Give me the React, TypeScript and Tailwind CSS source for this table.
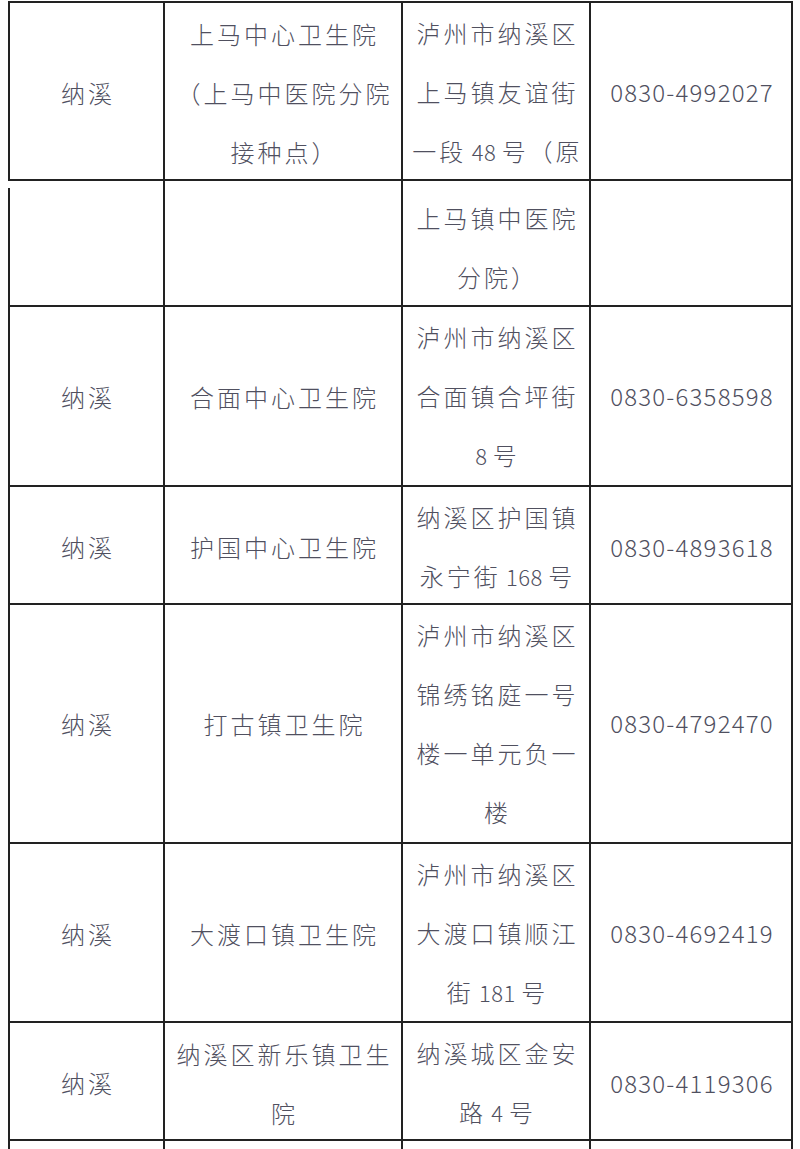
import React from "react";

type Row = {
  h: string;
  town: string;
  name: string[];
  addr: string[];
  phone: string;
};

const first: Row[] = [
  {
    h: "h-[178px]",
    town: "纳溪",
    name: ["上马中心卫生院", "（上马中医院分院", "接种点）"],
    addr: ["泸州市纳溪区", "上马镇友谊街", "一段 48 号（原"],
    phone: "0830-4992027",
  },
];

const rest: Row[] = [
  { h: "h-[119px]", town: "", name: [], addr: ["上马镇中医院", "分院）"], phone: "" },
  {
    h: "h-[180px]",
    town: "纳溪",
    name: ["合面中心卫生院"],
    addr: ["泸州市纳溪区", "合面镇合坪街", "8 号"],
    phone: "0830-6358598",
  },
  {
    h: "h-[118px]",
    town: "纳溪",
    name: ["护国中心卫生院"],
    addr: ["纳溪区护国镇", "永宁街 168 号"],
    phone: "0830-4893618",
  },
  {
    h: "h-[239px]",
    town: "纳溪",
    name: ["打古镇卫生院"],
    addr: ["泸州市纳溪区", "锦绣铭庭一号", "楼一单元负一", "楼"],
    phone: "0830-4792470",
  },
  {
    h: "h-[179px]",
    town: "纳溪",
    name: ["大渡口镇卫生院"],
    addr: ["泸州市纳溪区", "大渡口镇顺江", "街 181 号"],
    phone: "0830-4692419",
  },
  {
    h: "h-[118px]",
    town: "纳溪",
    name: ["纳溪区新乐镇卫生", "院"],
    addr: ["纳溪城区金安", "路 4 号"],
    phone: "0830-4119306",
  },
  { h: "h-[120px]", town: "", name: [], addr: [], phone: "" },
];

// digits inside addresses are narrower than the CJK text around them
function Mixed({ text }: { text: string }) {
  const parts = text.split(/( ?\d+ ?)/);
  return (
    <>
      {parts.map((p, i) =>
        /\d/.test(p) ? (
          <span key={i} className="whitespace-pre text-[22px] tracking-[0.5px]">
            {p}
          </span>
        ) : (
          <span key={i}>{p}</span>
        )
      )}
    </>
  );
}

function Cell({ lines }: { lines: string[] }) {
  return (
    <div className="flex flex-col items-center justify-center border-r-2 border-[#222] pb-[8px]">
      {lines.map((l) => (
        <div key={l} className="whitespace-nowrap pl-[3px] leading-[59px]">
          <Mixed text={l} />
        </div>
      ))}
    </div>
  );
}

function TableRow({ row }: { row: Row }) {
  return (
    <div
      className={`grid grid-cols-[155px_238px_188px_202px] border-b-2 border-[#222] ${row.h}`}
    >
      <Cell lines={row.town ? [row.town] : []} />
      <Cell lines={row.name} />
      <Cell lines={row.addr} />
      <div className="flex items-center justify-center border-r-2 border-[#222] pb-[8px] pl-[2px]">
        <span className="tracking-[1.2px]">{row.phone}</span>
      </div>
    </div>
  );
}

export default function App() {
  return (
    <div className="h-[1149px] overflow-hidden bg-white font-['Noto_Sans_CJK_SC','Noto_Sans',sans-serif] text-[24px] font-light tracking-[3px] text-[#50505f]">
      {/* page one: closed table */}
      <div className="ml-[8px] mt-[1px] w-[785px] border-l-2 border-t-2 border-[#222]">
        {first.map((r, i) => (
          <TableRow key={i} row={r} />
        ))}
      </div>

      {/* page two: continues without a top rule */}
      <div className="ml-[8px] mt-[7px] w-[785px] border-l-2 border-[#222]">
        {rest.map((r, i) => (
          <TableRow key={i} row={r} />
        ))}
      </div>
    </div>
  );
}
